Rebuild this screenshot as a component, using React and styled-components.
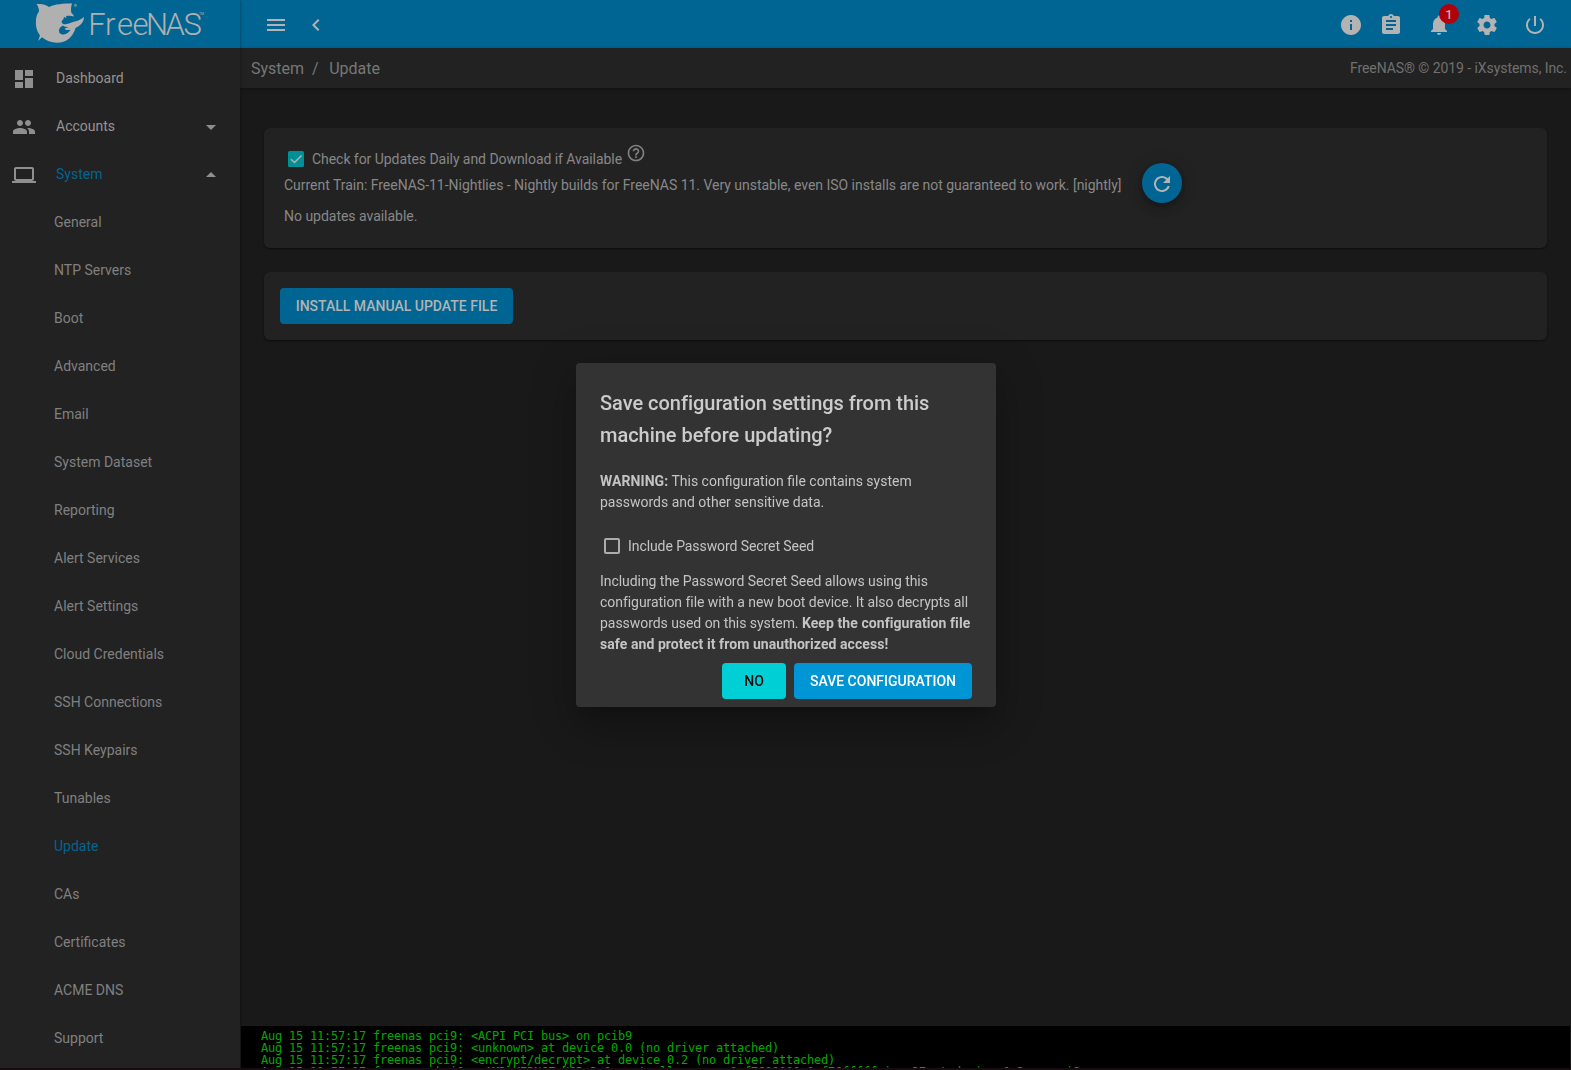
import React from "react";
import styled, { createGlobalStyle } from "styled-components";

const Global = createGlobalStyle`
  * { box-sizing: border-box; }
  html, body, #root { margin: 0; height: 100%; }
  body { background: #191919; overflow: hidden; font-family: Roboto, sans-serif; font-size: 14px; color: #888; }
`;
const Screen = styled.div`display: flex; width: 1571px; height: 1070px; overflow: hidden; border-bottom: 2px solid #160c10;`;
const Sidebar = styled.aside`width: 240px; flex: none; background: #222; box-shadow: 0 0 3px rgba(0,0,0,.45); z-index: 1;`;
const Brand = styled.div`height: 48px; background: #006592; svg { display: block; }`;
const Nav = styled.nav`padding-top: 6px;`;
const NavItem = styled.div`
  display: flex; align-items: center; height: 48px; padding: 0 17px 0 ${p => (p.$sub ? 54 : 12)}px;
  color: ${p => (p.$active ? "#006592" : p.$sub ? "#808080" : "#949494")};
  svg { color: #8f8f8f; flex: none; position: relative; top: 1px; }
`;
const NavLabel = styled.span`flex: 1; margin-left: ${p => (p.$sub ? 0 : 20)}px;`;
const Main = styled.main`flex: 1; display: flex; flex-direction: column; min-width: 0;`;
const TopBar = styled.header`
  display: flex; align-items: center; height: 48px; flex: none; padding: 2px 24px 0 24px; background: #006592; color: #b3b3b3;
  svg { flex: none; }
`;
const Spacer = styled.div`flex: 1;`;
const IconSlot = styled.div`width: 24px; height: 24px; position: relative; margin-left: ${p => p.$gap || 0}px;`;
const Badge = styled.span`
  position: absolute; left: 12px; top: -9px; width: 20px; height: 20px; border-radius: 50%; background: #b10009;
  color: #b3b3b3; font-size: 13px; font-weight: 500; line-height: 21px; text-align: center;
`;
const Crumbs = styled.div`
  display: flex; align-items: center; height: 40px; flex: none; padding: 0 4px 0 11px; background: #222; color: #777; font-size: 16px;
  box-shadow: 0 1px 3px rgba(0,0,0,.35);
`;
const Slash = styled.span`margin: 0 10.500px 0 8px;`;
const Copyright = styled.span`margin-left: auto; font-size: 14px; color: #707070; letter-spacing: -.07px;`;
const Content = styled.div`flex: 1; padding: 40px 24px 0; display: flex; flex-direction: column; gap: 24px;`;
const Card = styled.section`
  background: #222; border-radius: 6px; box-shadow: 0 1px 2px rgba(0,0,0,.5); height: ${p => p.$h}px;
  padding: ${p => p.$pad}; display: flex; align-items: flex-start;
`;
const Updates = styled.div`display: flex; flex-direction: column;`;
const CheckRow = styled.div`display: flex; align-items: center; height: 21px; margin-left: 4px;`;
const CheckLabel = styled.span`margin-left: 8px; letter-spacing: -.05px;`;
const HelpSlot = styled.span`display: flex; margin: -12px 0 0 4px; color: #808080;`;
const Line = styled.div`line-height: 21px; margin-top: ${p => p.$mt}px; white-space: nowrap; letter-spacing: -.022px;`;
const Refresh = styled.button`
  width: 40px; height: 40px; border: 0; border-radius: 50%; margin: 15px 0 0 20px; padding: 0; background: #006592; color: #b3b3b3;
  display: flex; align-items: center; justify-content: center;
  box-shadow: 0 3px 5px -1px rgba(0,0,0,.2), 0 6px 10px rgba(0,0,0,.14), 0 1px 18px rgba(0,0,0,.12);
  svg { position: relative; top: 1px; }
`;
const Button = styled.button`
  height: 36px; padding: 0; width: ${p => p.$w}px; border: 0; border-radius: 4px; font: 500 14px/36px Roboto, sans-serif;
  background: ${p => p.$bg}; color: ${p => p.$fg}; white-space: nowrap; text-align: center;
`;
const Console = styled.pre`
  height: 42px; flex: none; margin: 0 1px; padding: 4px 20px 0; overflow: hidden; background: #000; color: #00a900;
  font: 12px/12px "DejaVu Sans Mono", monospace; letter-spacing: -.224px;
`;
const Overlay = styled.div`position: fixed; inset: 0; z-index: 5; display: flex; align-items: flex-start; justify-content: center; padding-top: 363px;`;
const Dialog = styled.div`
  width: 420px; height: 344px; margin-left: 1px; background: #333; border-radius: 4px; color: #c4c4c4; padding: 24px 24px 8px;
  box-shadow: 0 11px 15px -7px rgba(0,0,0,.2), 0 24px 38px 3px rgba(0,0,0,.14), 0 9px 46px 8px rgba(0,0,0,.12);
`;
const Title = styled.h1`margin: 0 0 20px; font-size: 20px; font-weight: 500; line-height: 32px; color: #ccc; letter-spacing: -.03px;`;
const Text = styled.p`margin: 0; line-height: 21px; letter-spacing: ${p => p.$track || 0}px; b { letter-spacing: .07px; }`;
const Option = styled.label`display: flex; align-items: center; height: 24px; margin: 21px 0 13px 4px; line-height: 24px; letter-spacing: -.08px;`;
const Box = styled.span`width: 16px; height: 16px; border: 2px solid #acacac; border-radius: 2px; margin-right: 8px;`;
const Actions = styled.div`display: flex; justify-content: flex-end; gap: 8px; margin-top: 8px;`;

const Icon = ({ d, size = 24 }) => (
  <svg width={size} height={size} viewBox="0 0 24 24" fill="currentColor"><path d={d} /></svg>
);
const icons = {
  dashboard: "M3 13h8V3H3v10zm0 8h8v-6H3v6zm10 0h8V11h-8v10zm0-18v6h8V3h-8z",
  people: "M16 11c1.66 0 2.99-1.34 2.99-3S17.66 5 16 5c-1.66 0-3 1.34-3 3s1.34 3 3 3zm-8 0c1.66 0 2.99-1.34 2.99-3S9.66 5 8 5C6.34 5 5 6.34 5 8s1.34 3 3 3zm0 2c-2.33 0-7 1.17-7 3.5V19h14v-2.5c0-2.33-4.67-3.5-7-3.5zm8 0c-.29 0-.62.02-.97.05 1.16.84 1.97 1.97 1.97 3.45V19h6v-2.5c0-2.33-4.67-3.5-7-3.5z",
  laptop: "M20 18c1.1 0 1.99-.9 1.99-2L22 6c0-1.1-.9-2-2-2H4c-1.1 0-2 .9-2 2v10c0 1.1.9 2 2 2H0v2h24v-2h-4zM4 6h16v10H4V6z",
  down: "M7 10l5 5 5-5z",
  up: "M7 14l5-5 5 5z",
  menu: "M3 18h18v-2H3v2zm0-5h18v-2H3v2zm0-7v2h18V6H3z",
  left: "M15.41 7.41L14 6l-6 6 6 6 1.41-1.41L10.83 12z",
  info: "M12 2C6.48 2 2 6.48 2 12s4.48 10 10 10 10-4.48 10-10S17.52 2 12 2zm1 15h-2v-6h2v6zm0-8h-2V7h2v2z",
  tasks: "M19 3h-4.18C14.4 1.84 13.3 1 12 1c-1.3 0-2.4.84-2.82 2H5c-1.1 0-2 .9-2 2v14c0 1.1.9 2 2 2h14c1.1 0 2-.9 2-2V5c0-1.1-.9-2-2-2zm-7 0c.55 0 1 .45 1 1s-.45 1-1 1-1-.45-1-1 .45-1 1-1zm2 14H7v-2h7v2zm3-4H7v-2h10v2zm0-4H7V7h10v2z",
  bell: "M12 22c1.1 0 2-.9 2-2h-4c0 1.1.89 2 2 2zm6-6v-5c0-3.07-1.64-5.64-4.5-6.32V4c0-.83-.67-1.5-1.5-1.5s-1.5.67-1.5 1.5v.68C7.63 5.36 6 7.92 6 11v5l-2 2v1h16v-1l-2-2z",
  gear: "M19.43 12.98c.04-.32.07-.64.07-.98s-.03-.66-.07-.98l2.11-1.65c.19-.15.24-.42.12-.64l-2-3.46c-.12-.22-.39-.3-.61-.22l-2.49 1c-.52-.4-1.08-.73-1.69-.98l-.38-2.65C14.46 2.18 14.25 2 14 2h-4c-.25 0-.46.18-.49.42l-.38 2.65c-.61.25-1.17.59-1.69.98l-2.49-1c-.23-.09-.49 0-.61.22l-2 3.46c-.13.22-.07.49.12.64l2.11 1.65c-.04.32-.07.65-.07.98s.03.66.07.98l-2.11 1.65c-.19.15-.24.42-.12.64l2 3.46c.12.22.39.3.61.22l2.49-1c.52.4 1.08.73 1.69.98l.38 2.65c.03.24.24.42.49.42h4c.25 0 .46-.18.49-.42l.38-2.65c.61-.25 1.17-.59 1.69-.98l2.49 1c.23.09.49 0 .61-.22l2-3.46c.12-.22.07-.49-.12-.64l-2.11-1.65zM12 15.5c-1.93 0-3.5-1.57-3.5-3.5s1.57-3.5 3.5-3.5 3.5 1.57 3.5 3.5-1.57 3.5-3.5 3.5z",
  power: "M13 3h-2v10h2V3zm4.83 2.17l-1.42 1.42C17.99 7.86 19 9.81 19 12c0 3.87-3.13 7-7 7s-7-3.13-7-7c0-2.19 1.01-4.14 2.58-5.42L6.17 5.17C4.23 6.82 3 9.26 3 12c0 4.97 4.03 9 9 9s9-4.03 9-9c0-2.74-1.23-5.18-3.17-6.83z",
  help: "M11 18h2v-2h-2v2zm1-16C6.48 2 2 6.48 2 12s4.48 10 10 10 10-4.48 10-10S17.52 2 12 2zm0 18c-4.41 0-8-3.59-8-8s3.59-8 8-8 8 3.59 8 8-3.59 8-8 8zm0-14c-2.21 0-4 1.79-4 4h2c0-1.1.9-2 2-2s2 .9 2 2c0 2-3 1.75-3 5h2c0-2.25 3-2.5 3-5 0-2.21-1.79-4-4-4z",
  refresh: "M17.65 6.35C16.2 4.9 14.21 4 12 4c-4.42 0-7.99 3.58-7.99 8s3.57 8 7.99 8c3.73 0 6.84-2.55 7.73-6h-2.08c-.82 2.33-3.04 4-5.65 4-3.31 0-6-2.69-6-6s2.69-6 6-6c1.66 0 3.14.69 4.22 1.78L13 11h7V4l-2.35 2.35z",
};

const Logo = () => (
  <svg width="240" height="48" viewBox="0 0 240 48" fill="#b0b0b0">
    <path fillRule="evenodd" d="M36.500 4C42 4 46 4.500 49 7C55 4 63 3.500 72 3.200C71 7 70.500 10 71.500 13C73 14.500 74 15.500 74 16.500C71 15.500 68.500 15.500 66 16L66.500 18L64 17L63.500 19C61.500 20.500 61 22 62.500 23.500C65 25.500 69 23.500 73 22C77 21.500 81 19.500 84 17C84 22 80.500 25.800 75.500 28C73 37 66.500 42.700 57 42.700C51 42.700 46 40.500 42 37.200L38 41L40 35.500C36.500 31 35.300 25.500 36 19.500C36.300 16 37.500 13.500 39 11.500C39 8.500 38 6 36.500 4ZM63 25.500C60.500 26.500 59 28.500 59 30.700C59 33.500 61 34.800 63.500 34.500C67 34.300 69.500 32 70.500 29.500C67.500 30.500 65.500 30 64.500 28.700L68.500 27C66 27 64 26.500 63 25.500Z"/>
    <circle cx="75.500" cy="5.200" r="1.500" opacity=".55"/>
    <text x="88.300 105 117 132.500 146 165.500 183.500" y="34.500" fontFamily="Roboto" fontWeight="300" fontSize="31">FreeNAS</text>
    <text x="199" y="14.500" fontFamily="Roboto" fontSize="4" textLength="5" lengthAdjust="spacingAndGlyphs">TM</text>
  </svg>
);

const subs = ["General", "NTP Servers", "Boot", "Advanced", "Email", "System Dataset", "Reporting", "Alert Services", "Alert Settings", "Cloud Credentials", "SSH Connections", "SSH Keypairs", "Tunables", "Update", "CAs", "Certificates", "ACME DNS", "Support"];
const log = `Aug 15 11:57:17 freenas pci9: <ACPI PCI bus> on pcib9
Aug 15 11:57:17 freenas pci9: <unknown> at device 0.0 (no driver attached)
Aug 15 11:57:17 freenas pci9: <encrypt/decrypt> at device 0.2 (no driver attached)
Aug 15 11:57:17 freenas xhci0: <AMD KERNCZ USB 3.0 controller> mem 0xf7600000-0xf76fffff irq 37 at device 0.3 on pci9`;

export default function App() {
  return (
    <>
      <Global />
      <Screen>
        <Sidebar>
          <Brand><Logo /></Brand>
          <Nav>
            <NavItem><Icon d={icons.dashboard} /><NavLabel>Dashboard</NavLabel></NavItem>
            <NavItem><Icon d={icons.people} /><NavLabel>Accounts</NavLabel><Icon d={icons.down} /></NavItem>
            <NavItem $active><Icon d={icons.laptop} /><NavLabel>System</NavLabel><Icon d={icons.up} /></NavItem>
            {subs.map(s => <NavItem key={s} $sub $active={s === "Update"}><NavLabel $sub>{s}</NavLabel></NavItem>)}
          </Nav>
        </Sidebar>
        <Main>
          <TopBar>
            <IconSlot><Icon d={icons.menu} /></IconSlot>
            <IconSlot $gap={16}><Icon d={icons.left} /></IconSlot>
            <Spacer />
            <IconSlot><Icon d={icons.info} /></IconSlot>
            <IconSlot $gap={16}><Icon d={icons.tasks} /></IconSlot>
            <IconSlot $gap={24}><Icon d={icons.bell} /><Badge>1</Badge></IconSlot>
            <IconSlot $gap={24}><Icon d={icons.gear} /></IconSlot>
            <IconSlot $gap={24}><Icon d={icons.power} /></IconSlot>
          </TopBar>
          <Crumbs>System<Slash>/</Slash>Update<Copyright>FreeNAS® © 2019 - iXsystems, Inc.</Copyright></Crumbs>
          <Content>
            <Card $h={120} $pad="20px">
              <Updates>
                <CheckRow>
                  <svg width="16" height="16" viewBox="0 0 16 16"><rect width="16" height="16" rx="1.500" fill="#009096" /><path d="M3 8.300L6.500 11.500L13.500 4.500" fill="none" stroke="#b3b3b3" strokeWidth="1.500" /></svg>
                  <CheckLabel>Check for Updates Daily and Download if Available</CheckLabel>
                  <HelpSlot><Icon d={icons.help} size={20} /></HelpSlot>
                </CheckRow>
                <Line $mt={6}>Current Train: FreeNAS-11-Nightlies - Nightly builds for FreeNAS 11. Very unstable, even ISO installs are not guaranteed to work. [nightly]</Line>
                <Line $mt={10}>No updates available.</Line>
              </Updates>
              <Refresh><Icon d={icons.refresh} size={24} /></Refresh>
            </Card>
            <Card $h={68} $pad="16px">
              <Button $w={233} $bg="#006592" $fg="#b3b3b3">INSTALL MANUAL UPDATE FILE</Button>
            </Card>
          </Content>
          <Console>{log}</Console>
        </Main>
      </Screen>
      <Overlay>
        <Dialog>
          <Title>Save configuration settings from this machine before updating?</Title>
          <Text><b>WARNING:</b> This configuration file contains system passwords and other sensitive data.</Text>
          <Option><Box />Include Password Secret Seed</Option>
          <Text $track={-0.05}>Including the Password Secret Seed allows using this configuration file with a new boot device. It also decrypts all passwords used on this system. <b>Keep the configuration file safe and protect it from unauthorized access!</b></Text>
          <Actions>
            <Button $w={64} $bg="#00d0d6" $fg="#0d0d0d">NO</Button>
            <Button $w={178} $bg="#0095d5" $fg="#fff">SAVE CONFIGURATION</Button>
          </Actions>
        </Dialog>
      </Overlay>
    </>
  );
}
